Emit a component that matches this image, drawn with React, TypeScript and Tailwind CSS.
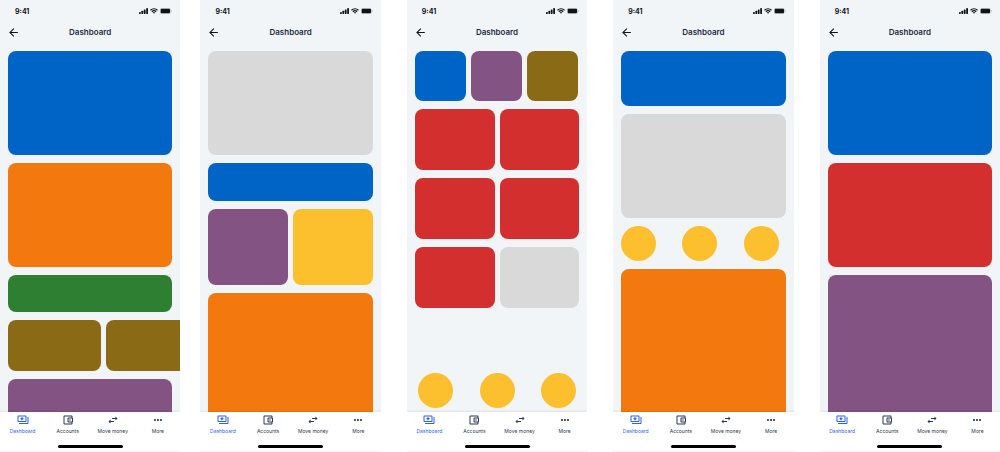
import type { ReactNode } from "react";
import {
  MdArrowBack,
  MdMoreHoriz,
  MdOutlineAccountBalanceWallet,
  MdSwapHoriz,
} from "react-icons/md";

function SignalIcon() {
  return (
    <svg viewBox="0 0 18 12" className="h-[6px] w-[9px]" fill="currentColor" aria-hidden="true">
      <rect x="0" y="8" width="3.6" height="4" rx="0.8" />
      <rect x="4.8" y="5.6" width="3.6" height="6.4" rx="0.8" />
      <rect x="9.6" y="3" width="3.6" height="9" rx="0.8" />
      <rect x="14.4" y="0" width="3.6" height="12" rx="0.8" />
    </svg>
  );
}

function WifiIcon() {
  return (
    <svg viewBox="0 0 17 12" className="h-[6px] w-[8px]" fill="none" stroke="currentColor" strokeWidth="2.6" aria-hidden="true">
      <path d="M1 4.4a10.8 10.8 0 0 1 15 0" />
      <path d="M3.9 7.6a6.6 6.6 0 0 1 9.2 0" />
      <path d="M8.5 12 6 9.400a3.6 3.6 0 0 1 5 0Z" fill="currentColor" stroke="none" />
    </svg>
  );
}

function BatteryIcon() {
  return (
    <svg viewBox="0 0 27 13" className="h-[6px] w-[12px]" aria-hidden="true">
      <rect x="0.5" y="0.5" width="23" height="12" rx="3.6" fill="none" stroke="currentColor" strokeOpacity="0.4" />
      <rect x="1.5" y="1.5" width="21" height="10" rx="2.4" fill="currentColor" />
      <path d="M25 4.5v4c.8-.3 1.4-1.100 1.400-2s-.6-1.700-1.400-2Z" fill="currentColor" fillOpacity="0.4" />
    </svg>
  );
}

function DashboardIcon() {
  return (
    <svg viewBox="0 0 24 24" className="size-[12px]" fill="currentColor" aria-hidden="true">
      <path d="M19 14V5c0-1.100-.9-2-2-2H3c-1.100 0-2 .9-2 2v9c0 1.100.9 2 2 2h14c1.100 0 2-.9 2-2zm-2 0H3V5h14v9z" />
      <path d="M10 5.500 11.500 8 14 9.500 11.500 11 10 13.500 8.500 11 6 9.500 8.500 8Z" />
      <path d="M23 6v12c0 1.100-.9 2-2 2H4v-2h17V6h2z" />
    </svg>
  );
}

const tabs: { label: string; icon: ReactNode; active?: boolean }[] = [
  { label: "Dashboard", icon: <DashboardIcon />, active: true },
  { label: "Accounts", icon: <MdOutlineAccountBalanceWallet className="size-[12px]" /> },
  { label: "Move money", icon: <MdSwapHoriz className="size-[12px]" /> },
  { label: "More", icon: <MdMoreHoriz className="size-[12px]" /> },
];

function Card({ className }: { className: string }) {
  return <div className={`shrink-0 rounded-[8px] ${className}`} />;
}

function Circles({ className }: { className: string }) {
  return (
    <div className={`flex shrink-0 justify-between ${className}`}>
      <div className="size-[35px] rounded-full bg-[#fcc02e]" />
      <div className="size-[35px] rounded-full bg-[#fcc02e]" />
      <div className="size-[35px] rounded-full bg-[#fcc02e]" />
    </div>
  );
}

function Phone({ children }: { children: ReactNode }) {
  return (
    <section className="flex min-w-0 flex-1 flex-col overflow-hidden bg-[#f2f5f8]">
      <div className="flex h-[21px] shrink-0 items-center justify-between pr-2 pl-[15px] text-[#101418]">
        <span className="pt-[2px] text-[7px] leading-[8px] font-bold">9:41</span>
        <div className="flex items-center gap-[2px]">
          <SignalIcon />
          <WifiIcon />
          <BatteryIcon />
        </div>
      </div>
      <header className="grid h-[22px] shrink-0 grid-cols-[1fr_auto_1fr] items-center px-2">
        <button type="button" aria-label="Back" className="-ml-px justify-self-start text-[#101418]">
          <MdArrowBack className="size-[13px]" />
        </button>
        <h1 className="text-[8px] font-semibold text-[#1c2a44]">Dashboard</h1>
      </header>
      <main className="flex min-h-0 flex-1 flex-col gap-2 overflow-hidden px-2 pt-2">{children}</main>
      <nav className="z-10 flex shrink-0 flex-col items-center border-b border-[#f5f5f6] bg-white pt-[2px] pb-[3px] shadow-[0_-1px_2px_rgba(0,0,0,0.08)]">
        <div className="grid w-full grid-cols-4">
          {tabs.map((tab) => (
            <a
              key={tab.label}
              href="#"
              className={`flex flex-col items-center gap-[2px] text-[5px] leading-[6px] whitespace-nowrap ${
                tab.active ? "text-[#2f5fe8]" : "text-[#2b3850]"
              }`}
            >
              {tab.icon}
              {tab.label}
            </a>
          ))}
        </div>
        <div className="mt-[11px] h-[3px] w-[65px] rounded-full bg-black" />
      </nav>
    </section>
  );
}

export default function App() {
  return (
    <div className="flex h-screen gap-[26px] bg-white font-['Inter',sans-serif]">
      <div className="-mr-[6px] flex min-w-0 flex-1">
        <Phone>
          <Card className="h-[104px] bg-[#0063c6]" />
          <Card className="h-[104px] bg-[#f3790e]" />
          <Card className="h-[37px] bg-[#2f7f33]" />
          <div className="flex shrink-0 gap-[5px]">
            <Card className="h-[51px] w-[93px] bg-[#8b6a16]" />
            <Card className="h-[51px] w-[93px] bg-[#8b6a16]" />
          </div>
          <Card className="h-[104px] bg-[#825383]" />
        </Phone>
      </div>
      <Phone>
        <Card className="h-[104px] bg-[#d9d9d9]" />
        <Card className="h-[38px] bg-[#0063c6]" />
        <div className="grid shrink-0 grid-cols-2 gap-[5px]">
          <Card className="h-[76px] bg-[#825383]" />
          <Card className="h-[76px] bg-[#fcc02e]" />
        </div>
        <Card className="h-[160px] bg-[#f3790e]" />
      </Phone>
      <Phone>
        <div className="grid shrink-0 grid-cols-3 gap-[5px] pr-px">
          <Card className="h-[50px] bg-[#0063c6]" />
          <Card className="h-[50px] bg-[#825383]" />
          <Card className="h-[50px] bg-[#8b6a16]" />
        </div>
        <div className="grid shrink-0 grid-cols-2 gap-x-[5px] gap-y-2">
          <Card className="h-[61px] bg-[#d32f2f]" />
          <Card className="h-[61px] bg-[#d32f2f]" />
          <Card className="h-[61px] bg-[#d32f2f]" />
          <Card className="h-[61px] bg-[#d32f2f]" />
          <Card className="h-[61px] bg-[#d32f2f]" />
          <Card className="h-[61px] bg-[#d9d9d9]" />
        </div>
        <Circles className="mt-auto px-[3px] pb-1" />
      </Phone>
      <Phone>
        <Card className="h-[55px] bg-[#0063c6]" />
        <Card className="h-[104px] bg-[#d9d9d9]" />
        <Circles className="pr-[7px]" />
        <Card className="h-[160px] bg-[#f3790e]" />
      </Phone>
      <Phone>
        <Card className="h-[104px] bg-[#0063c6]" />
        <Card className="h-[104px] bg-[#d32f2f]" />
        <Card className="h-[160px] bg-[#825383]" />
      </Phone>
    </div>
  );
}
